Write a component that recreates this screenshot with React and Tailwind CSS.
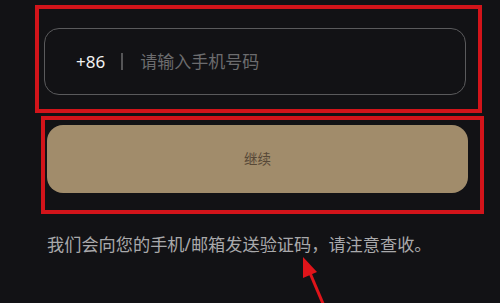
export default function App() {
  return (
    <div
      className="relative w-[500px] h-[303px] overflow-hidden bg-[#121215] pt-[5px]"
      style={{ fontFamily: '"Noto Sans", "Noto Sans CJK SC", sans-serif' }}
    >
      {/* annotation box 1 */}
      <div className="ml-[35px] w-[447px] h-[108px] border-4 border-[#d2141a] pl-[5px] pr-[12px] pt-[19px]">
        <div className="h-[67px] rounded-[15px] border-[1.5px] border-[#5a5a5c] flex items-center pl-[31px]">
          <span className="text-[17px] text-[#f2f2f2] leading-none">+86</span>
          <span className="ml-[16px] w-[2px] h-[17px] bg-[#555557]" />
          <span className="ml-[17px] text-[17px] text-[#6c6c6e] leading-none">请输入手机号码</span>
        </div>
      </div>

      {/* annotation box 2 */}
      <div className="mt-[3px] ml-[41px] w-[443px] h-[98px] border-4 border-[#d2141a] pl-[2px] pr-[12px] pt-[5px]">
        <button className="w-full h-[68px] rounded-[16px] bg-[#a18c6b] flex items-center justify-center text-[13.5px] text-[#574837]">
          继续
        </button>
      </div>

      <p className="mt-[19px] ml-[47px] text-[17.2px] leading-[24px] text-[#a9a9ab]">
        我们会向您的手机/邮箱发送验证码，请注意查收。
      </p>

      <svg className="absolute left-0 top-0" width="500" height="303" viewBox="0 0 500 303">
        <line x1="310" y1="273" x2="324" y2="306" stroke="#e0141a" strokeWidth="3" />
        <polygon points="303,257 317,272 303,278" fill="#e0141a" />
      </svg>
    </div>
  );
}
